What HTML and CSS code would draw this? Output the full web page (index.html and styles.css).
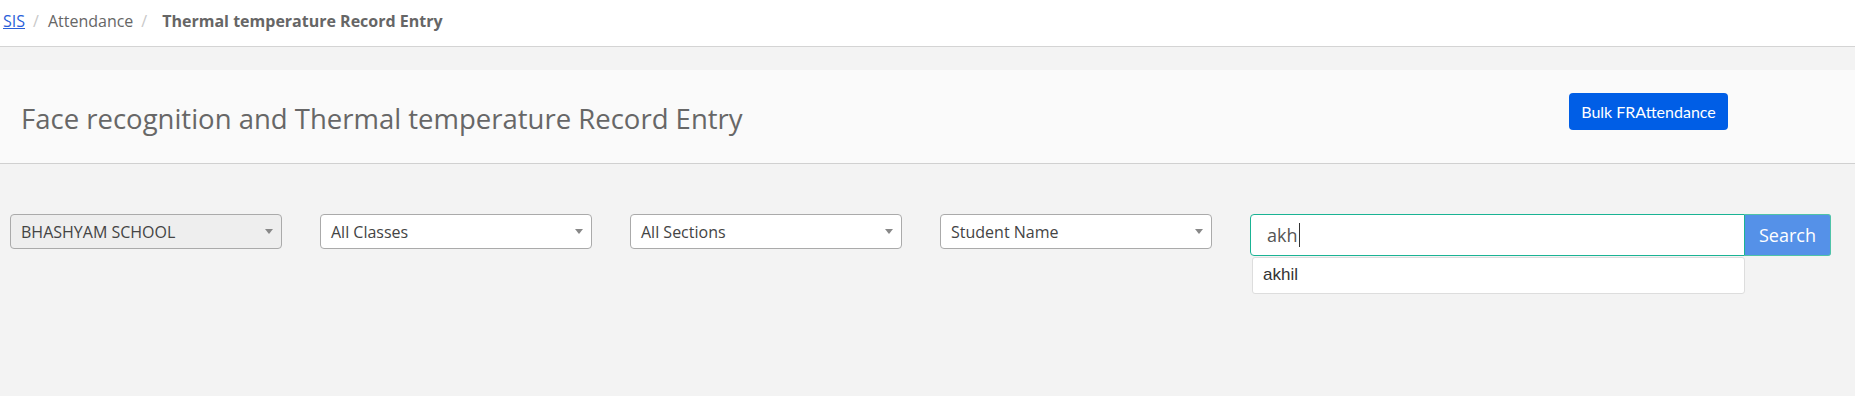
FILE: index.html
```html
<!DOCTYPE html>
<html lang="en">
<head>
<meta charset="utf-8">
<title>Thermal temperature Record Entry</title>
<link rel="stylesheet" href="styles.css">
</head>
<body>
<nav class="breadcrumb">
  <a class="crumb-link" href="#">SIS</a>
  <span class="sep">/</span>
  <span class="crumb">Attendance</span>
  <span class="sep">/</span>
  <span class="crumb-active">Thermal temperature Record Entry</span>
</nav>

<header class="page-header">
  <h1 class="page-title">Face recognition and Thermal temperature Record Entry</h1>
  <button class="btn-primary" type="button">Bulk FRAttendance</button>
</header>

<section class="filters">
  <div class="select select-disabled"><span class="select-text">BHASHYAM SCHOOL</span><span class="arrow"></span></div>
  <div class="select"><span class="select-text">All Classes</span><span class="arrow"></span></div>
  <div class="select"><span class="select-text">All Sections</span><span class="arrow"></span></div>
  <div class="select"><span class="select-text">Student Name</span><span class="arrow"></span></div>
  <div class="search-group">
    <div class="search-input"><span class="typed">akh</span></div>
    <button class="btn-search" type="button">Search</button>
    <ul class="suggestions">
      <li class="suggestion">akhil</li>
    </ul>
  </div>
</section>
</body>
</html>
```

FILE: styles.css
```css
* { box-sizing: border-box; }

body {
  margin: 0;
  background: #f3f3f3;
  font-family: "Open Sans", "Noto Sans", sans-serif;
  color: #666;
  height: 396px;
}

.breadcrumb {
  display: flex;
  align-items: baseline;
  height: 47px;
  padding: 10px 0 0 3px;
  background: #fff;
  border-bottom: 1px solid #d4d4d4;
  font-size: 16px;
}

.crumb-link {
  color: #2b5fd9;
  text-decoration: underline;
}

.sep {
  color: #c8c8c8;
  padding: 0 9px 0 8px;
}

.crumb { color: #666; }

.crumb-active {
  color: #666;
  font-weight: 700;
  padding-left: 6px;
}

.page-header {
  display: flex;
  align-items: flex-start;
  margin-top: 23px;
  height: 94px;
  background: #fafafa;
  border-bottom: 1px solid #d0d0d0;
}

.page-title {
  margin: 30px 0 0 0;
  padding-left: 21px;
  font-size: 27.5px;
  font-weight: 400;
  color: #676767;
  line-height: normal;
}

.btn-primary {
  margin: 23px 127px 0 auto;
  width: 159px;
  height: 37px;
  border: none;
  border-radius: 4px;
  background: #005ee6;
  color: #fff;
  font-family: "Lato", "Noto Sans", sans-serif;
  font-size: 16px;
  padding: 0;
}

.filters {
  display: flex;
  align-items: flex-start;
  gap: 38px;
  margin-top: 50px;
  padding-left: 10px;
}

.select {
  position: relative;
  display: flex;
  align-items: center;
  width: 272px;
  height: 35px;
  padding-left: 10px;
  background: #fff;
  border: 1px solid #aaa;
  border-radius: 4px;
  font-size: 16px;
  color: #444;
}

.select-disabled { background: #eee; }

.arrow {
  position: absolute;
  right: 8px;
  top: 14px;
  border-top: 5px solid #888;
  border-left: 4px solid transparent;
  border-right: 4px solid transparent;
}

.search-group {
  position: relative;
  display: flex;
}

.search-input {
  display: flex;
  align-items: center;
  width: 495px;
  height: 42px;
  padding-left: 16px;
  background: #fff;
  border: 1px solid #1ab394;
  border-radius: 4px 0 0 4px;
  font-size: 18px;
  color: #555;
}

.typed {
  border-right: 1px solid #333;
  padding-right: 1px;
  line-height: 24px;
}

.btn-search {
  width: 86px;
  height: 42px;
  background: #5591e8;
  border: 1px solid #4fc3a8;
  border-left: none;
  border-radius: 0 3px 3px 0;
  color: #fff;
  font-family: "Open Sans", sans-serif;
  font-size: 18px;
  padding: 0;
}

.suggestions {
  position: absolute;
  top: 43px;
  left: 2px;
  width: 493px;
  margin: 0;
  padding: 0;
  list-style: none;
  background: #fff;
  border: 1px solid #ddd;
  border-radius: 3px;
}

.suggestion {
  height: 35px;
  line-height: 34px;
  padding-left: 10px;
  font-family: "Liberation Sans", Arial, sans-serif;
  font-size: 17px;
  color: #333;
}
```
